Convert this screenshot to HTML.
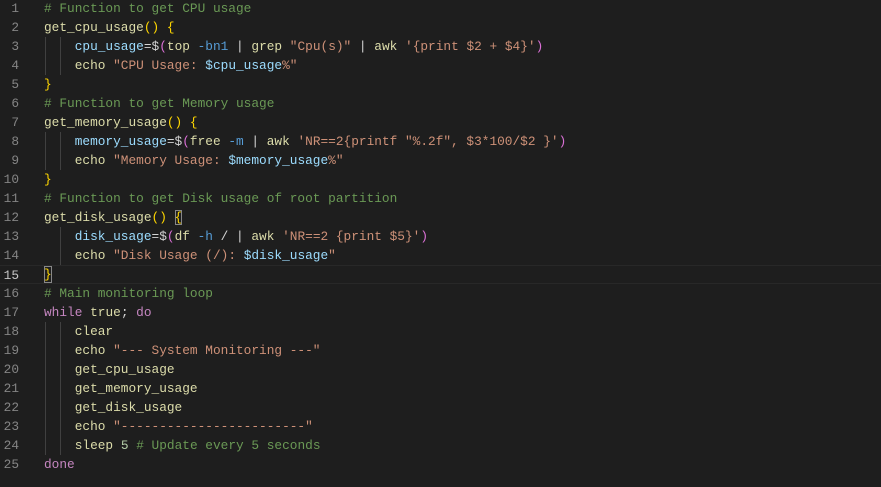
<!DOCTYPE html><html><head><style>
body{margin:0;background:#1e1e1e;width:881px;height:487px;overflow:hidden;font-family:"Liberation Mono",monospace;font-size:12.8px;}
.wrap{position:absolute;top:-1px;left:0;width:881px}
.l{height:19px;line-height:19px;position:relative;white-space:pre;color:#d4d4d4}
.n{position:absolute;left:0;width:19px;text-align:right;color:#858585}
.c{position:absolute;left:44px}
.cur{box-sizing:border-box;border-top:1px solid #282828;border-bottom:1px solid #282828}
.cur .n{color:#c6c6c6}
.g{position:absolute;width:1px;background:#404040;height:19px;top:0}
.cm{color:#6a9955}.f{color:#dcdcaa}.v{color:#9cdcfe}.s{color:#ce9178}.y{color:#ffd700}.p{color:#da70d6}.k{color:#c586c0}.b{color:#569cd6}.nm{color:#b5cea8}
</style></head><body><div class="wrap">
<div class="l"><span class="n">1</span><span class="c cm"># Function to get CPU usage</span></div>
<div class="l"><span class="n">2</span><span class="c"><span class="f">get_cpu_usage</span><span class="y">()</span> <span class="y">{</span></span></div>
<div class="l"><span class="g" style="left:45px"></span><span class="g" style="left:60px"></span><span class="n">3</span><span class="c">    <span class="v">cpu_usage</span>=$<span class="p">(</span><span class="f">top</span> <span class="b">-bn1</span> | <span class="f">grep</span> <span class="s">"Cpu(s)"</span> | <span class="f">awk</span> <span class="s">'{print $2 + $4}'</span><span class="p">)</span></span></div>
<div class="l"><span class="g" style="left:45px"></span><span class="g" style="left:60px"></span><span class="n">4</span><span class="c">    <span class="f">echo</span> <span class="s">"CPU Usage: </span><span class="v">$cpu_usage</span><span class="s">%"</span></span></div>
<div class="l"><span class="n">5</span><span class="c y">}</span></div>
<div class="l"><span class="n">6</span><span class="c cm"># Function to get Memory usage</span></div>
<div class="l"><span class="n">7</span><span class="c"><span class="f">get_memory_usage</span><span class="y">()</span> <span class="y">{</span></span></div>
<div class="l"><span class="g" style="left:45px"></span><span class="g" style="left:60px"></span><span class="n">8</span><span class="c">    <span class="v">memory_usage</span>=$<span class="p">(</span><span class="f">free</span> <span class="b">-m</span> | <span class="f">awk</span> <span class="s">'NR==2{printf "%.2f", $3*100/$2 }'</span><span class="p">)</span></span></div>
<div class="l"><span class="g" style="left:45px"></span><span class="g" style="left:60px"></span><span class="n">9</span><span class="c">    <span class="f">echo</span> <span class="s">"Memory Usage: </span><span class="v">$memory_usage</span><span class="s">%"</span></span></div>
<div class="l"><span class="n">10</span><span class="c y">}</span></div>
<div class="l"><span class="n">11</span><span class="c cm"># Function to get Disk usage of root partition</span></div>
<div class="l"><span class="n">12</span><span class="c"><span class="f">get_disk_usage</span><span class="y">()</span> <span class="y" style="outline:1px solid #888;outline-offset:-1px">{</span></span></div>
<div class="l"><span class="g" style="left:60px"></span><span class="n">13</span><span class="c">    <span class="v">disk_usage</span>=$<span class="p">(</span><span class="f">df</span> <span class="b">-h</span> / | <span class="f">awk</span> <span class="s">'NR==2 {print $5}'</span><span class="p">)</span></span></div>
<div class="l"><span class="g" style="left:60px"></span><span class="n">14</span><span class="c">    <span class="f">echo</span> <span class="s">"Disk Usage (/): </span><span class="v">$disk_usage</span><span class="s">"</span></span></div>
<div class="l cur"><span class="n">15</span><span class="c y" style="outline:1px solid #888;outline-offset:-1px;line-height:17px">}</span></div>
<div class="l"><span class="n">16</span><span class="c cm"># Main monitoring loop</span></div>
<div class="l"><span class="n">17</span><span class="c"><span class="k">while</span> <span class="f">true</span>; <span class="k">do</span></span></div>
<div class="l"><span class="g" style="left:45px"></span><span class="g" style="left:60px"></span><span class="n">18</span><span class="c">    <span class="f">clear</span></span></div>
<div class="l"><span class="g" style="left:45px"></span><span class="g" style="left:60px"></span><span class="n">19</span><span class="c">    <span class="f">echo</span> <span class="s">"--- System Monitoring ---"</span></span></div>
<div class="l"><span class="g" style="left:45px"></span><span class="g" style="left:60px"></span><span class="n">20</span><span class="c">    <span class="f">get_cpu_usage</span></span></div>
<div class="l"><span class="g" style="left:45px"></span><span class="g" style="left:60px"></span><span class="n">21</span><span class="c">    <span class="f">get_memory_usage</span></span></div>
<div class="l"><span class="g" style="left:45px"></span><span class="g" style="left:60px"></span><span class="n">22</span><span class="c">    <span class="f">get_disk_usage</span></span></div>
<div class="l"><span class="g" style="left:45px"></span><span class="g" style="left:60px"></span><span class="n">23</span><span class="c">    <span class="f">echo</span> <span class="s">"------------------------"</span></span></div>
<div class="l"><span class="g" style="left:45px"></span><span class="g" style="left:60px"></span><span class="n">24</span><span class="c">    <span class="f">sleep</span> <span class="nm">5</span> <span class="cm"># Update every 5 seconds</span></span></div>
<div class="l"><span class="n">25</span><span class="c k">done</span></div>
</div></body></html>
